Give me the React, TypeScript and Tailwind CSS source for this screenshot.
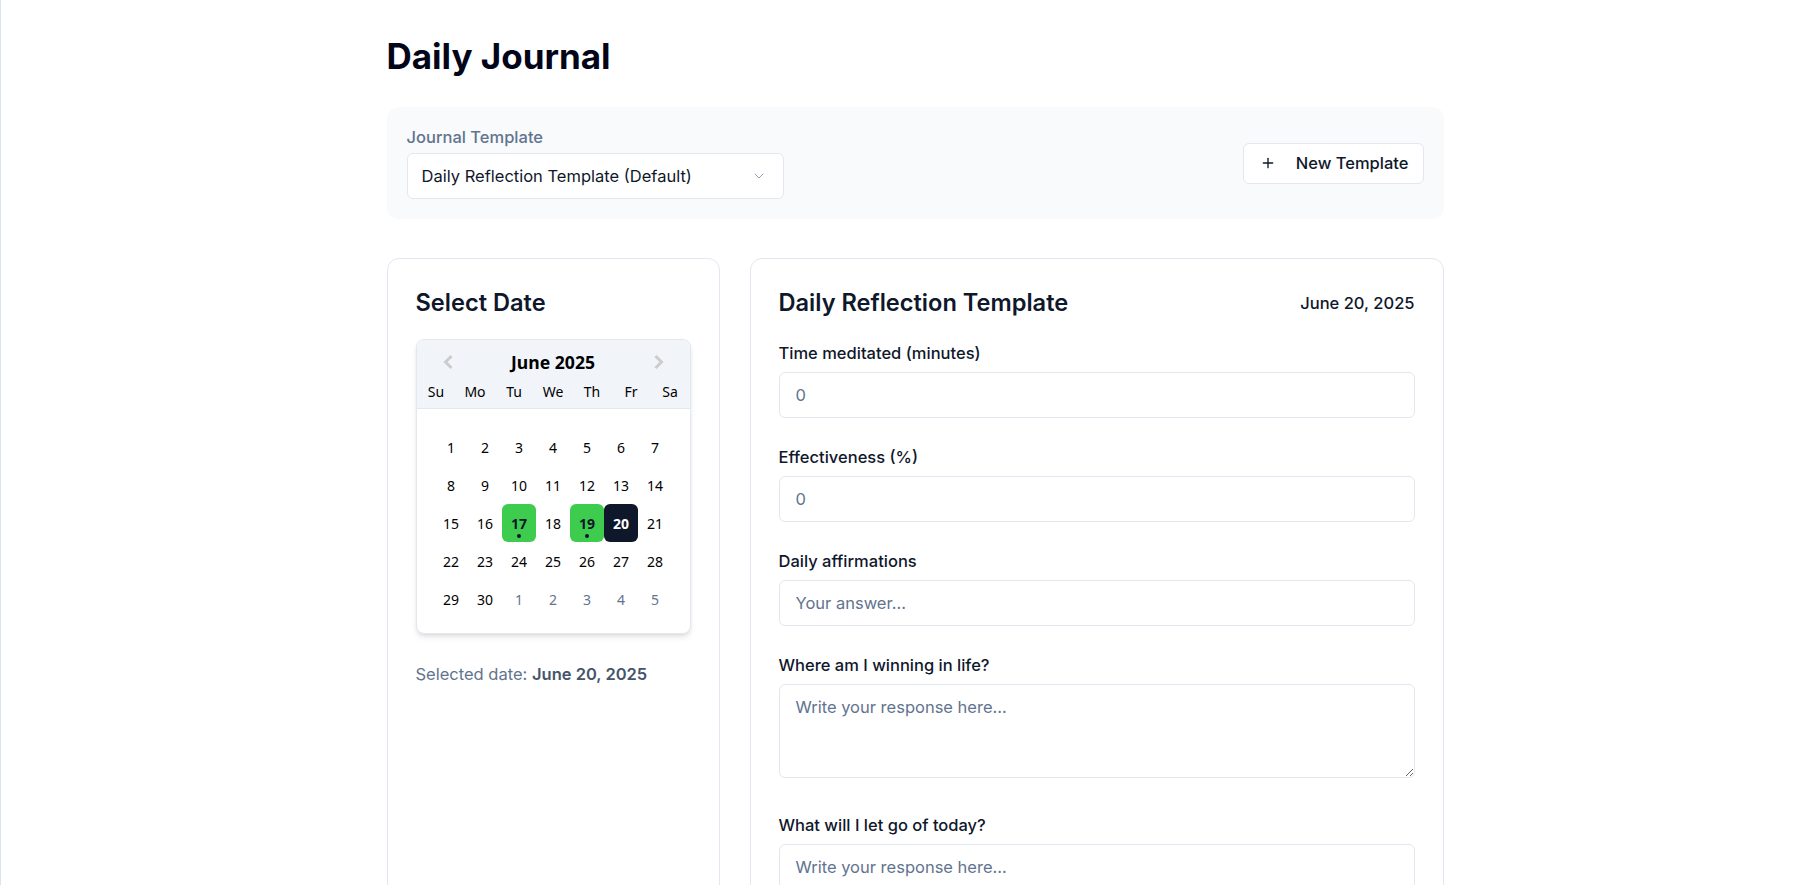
import { ChevronDown, Plus } from "lucide-react";

const inter = { fontFamily: "Inter, 'Noto Sans', sans-serif" };

type Day = { n: number; muted?: boolean; mark?: "done" | "selected" };

const weeks: Day[][] = [
    [1, 2, 3, 4, 5, 6, 7].map((n) => ({ n })),
    [8, 9, 10, 11, 12, 13, 14].map((n) => ({ n })),
    [
        { n: 15 }, { n: 16 }, { n: 17, mark: "done" }, { n: 18 },
        { n: 19, mark: "done" }, { n: 20, mark: "selected" }, { n: 21 },
    ],
    [22, 23, 24, 25, 26, 27, 28].map((n) => ({ n })),
    [
        { n: 29 }, { n: 30 }, { n: 1, muted: true }, { n: 2, muted: true },
        { n: 3, muted: true }, { n: 4, muted: true }, { n: 5, muted: true },
    ],
];

function Chevron({ dir }: { dir: "left" | "right" }) {
    return (
        <svg width="11" height="16" viewBox="0 0 11 16" fill="none">
            {dir === "left"
                ? <polyline points="8.5,2 2.5,8 8.5,14" stroke="#cccccc" strokeWidth="3" />
                : <polyline points="2.5,2 8.5,8 2.5,14" stroke="#cccccc" strokeWidth="3" />}
        </svg>
    );
}

function Calendar() {
    return (
        <div
            className="w-full rounded-lg border border-slate-200 bg-white shadow-md overflow-hidden"
            style={{ fontFamily: "'Noto Sans', 'Open Sans', sans-serif" }}
        >
            <div className="bg-slate-100 border-b border-slate-200 pt-[10px] pb-[5px]">
                <div className="flex items-center justify-between px-[26px] h-6">
                    <Chevron dir="left" />
                    <span className="text-[17.6px] font-bold text-black leading-6">June 2025</span>
                    <Chevron dir="right" />
                </div>
                <div className="grid grid-cols-7 mt-[5px] h-6 items-center text-center text-[14px] text-black">
                    {["Su", "Mo", "Tu", "We", "Th", "Fr", "Sa"].map((d) => (
                        <span key={d}>{d}</span>
                    ))}
                </div>
            </div>
            <div className="pt-[19px] pb-[15px]">
                <div className="mx-auto w-[238px]">
                    {weeks.map((week, i) => (
                        <div key={i} className="grid grid-cols-7">
                            {week.map((d, j) => (
                                <div
                                    key={j}
                                    className={
                                        "relative h-[38px] flex items-center justify-center text-[14px] rounded-md " +
                                        (d.mark === "done"
                                            ? "bg-[#3ecc4e] font-bold text-slate-900"
                                            : d.mark === "selected"
                                                ? "bg-[#0f172a] font-bold text-white"
                                                : d.muted
                                                    ? "text-slate-500"
                                                    : "text-black")
                                    }
                                >
                                    {d.n}
                                    {d.mark === "done" && (
                                        <span className="absolute bottom-1 left-1/2 -translate-x-1/2 w-1 h-1 rounded-full bg-slate-900" />
                                    )}
                                </div>
                            ))}
                        </div>
                    ))}
                </div>
            </div>
        </div>
    );
}

function Field({ label, placeholder, area }: { label: string; placeholder: string; area?: boolean }) {
    return (
        <div className="flex flex-col">
            <label className="text-[16.5px] leading-6 font-medium text-slate-900 mb-[7px]">{label}</label>
            {area
                ? <textarea
                    placeholder={placeholder}
                    className="block w-full h-[94px] rounded-md border border-slate-200 bg-white px-4 py-2.5 text-[16.5px] leading-6 placeholder:text-slate-500 outline-none"
                />
                : <input
                    placeholder={placeholder}
                    className="block w-full h-[46px] rounded-md border border-slate-200 bg-white px-4 text-[16.5px] placeholder:text-slate-500 outline-none"
                />}
        </div>
    );
}

export default function App() {
    return (
        <div className="min-h-screen bg-white border-l border-[#dbe3ef] pl-8 text-slate-900" style={inter}>
            <div className="mx-auto w-[1057px] pt-9">
                <h1 className="text-[35px] leading-10 font-bold text-slate-950 mb-[31px]">Daily Journal</h1>

                <div className="bg-slate-50 rounded-xl p-5 flex items-center justify-between mb-[39px]">
                    <div className="flex flex-col">
                        <span className="text-[16.5px] leading-5 font-medium text-slate-500 mb-1.5">Journal Template</span>
                        <div className="w-[377px] h-[46px] rounded-md border border-slate-200 bg-white flex items-center justify-between pl-[14px] pr-4">
                            <span className="text-[16.5px] text-slate-900">Daily Reflection Template (Default)</span>
                            <ChevronDown size={16} className="text-slate-400" strokeWidth={1.5} />
                        </div>
                    </div>
                    <button className="h-[41px] rounded-md border border-slate-200 bg-white flex items-center gap-5 pl-4 pr-[14px] text-[16.5px] font-medium text-slate-900">
                        <Plus size={16} strokeWidth={2} />
                        New Template
                    </button>
                </div>

                <div className="grid grid-cols-[333px_1fr] gap-[30px]">
                    <div className="rounded-xl border border-slate-200 bg-white p-7 min-h-[700px]">
                        <h2 className="text-[23.6px] leading-8 font-semibold text-slate-900 mb-5">Select Date</h2>
                        <Calendar />
                        <p className="mt-7 text-[16.5px] leading-6 text-slate-500">
                            Selected date: <span className="font-semibold text-slate-600">June 20, 2025</span>
                        </p>
                    </div>

                    <div className="rounded-xl border border-slate-200 bg-white p-7">
                        <div className="flex items-center justify-between h-8 mb-[22px]">
                            <h2 className="text-[23.6px] leading-8 font-semibold text-slate-900">Daily Reflection Template</h2>
                            <span className="text-[16.5px] font-medium text-slate-900">June 20, 2025</span>
                        </div>
                        <div className="flex flex-col gap-[27px]">
                            <Field label="Time meditated (minutes)" placeholder="0" />
                            <Field label="Effectiveness (%)" placeholder="0" />
                            <Field label="Daily affirmations" placeholder="Your answer..." />
                            <Field label="Where am I winning in life?" placeholder="Write your response here..." area />
                            <div className="mt-2">
                                <Field label="What will I let go of today?" placeholder="Write your response here..." area />
                            </div>
                            <Field label="What am I grateful for?" placeholder="Write your response here..." area />
                        </div>
                    </div>
                </div>
            </div>
        </div>
    );
}
